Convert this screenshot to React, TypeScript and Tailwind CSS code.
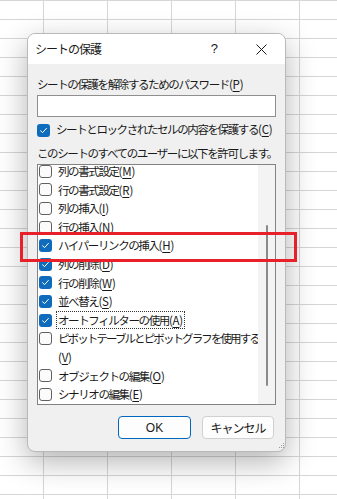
import React from 'react'

type Item = { label: string; key: string; checked: boolean; focus?: boolean; wrap?: boolean }

const items: Item[] = [
  { label: '列の書式設定', key: 'M', checked: false },
  { label: '行の書式設定', key: 'R', checked: false },
  { label: '列の挿入', key: 'I', checked: false },
  { label: '行の挿入', key: 'N', checked: false },
  { label: 'ハイパーリンクの挿入', key: 'H', checked: true },
  { label: '列の削除', key: 'D', checked: true },
  { label: '行の削除', key: 'W', checked: true },
  { label: '並べ替え', key: 'S', checked: true },
  { label: 'オートフィルターの使用', key: 'A', checked: true, focus: true },
  { label: 'ピボットテーブルとピボットグラフを使用する', key: 'V', checked: false, wrap: true },
  { label: 'オブジェクトの編集', key: 'O', checked: false },
  { label: 'シナリオの編集', key: 'E', checked: false },
]

function Checkbox({ checked }: { checked: boolean }) {
  if (checked) {
    return (
      <span className="flex h-[13px] w-[13px] shrink-0 items-center justify-center rounded-[3px] bg-[#0f6cbd]">
        <svg width="9" height="9" viewBox="0 0 9 9" fill="none">
          <path d="M1.6 4.8 L3.6 6.6 L7.4 2.4" stroke="white" strokeWidth="1" strokeLinecap="round" strokeLinejoin="round" />
        </svg>
      </span>
    )
  }
  return <span className="h-[13px] w-[13px] shrink-0 rounded-[3px] border border-[#616161] bg-[#fbfbfb]" />
}

function Hotkey({ k }: { k: string }) {
  return (
    <span className="tracking-[-0.2px]">
      (<span className="underline underline-offset-2">{k}</span>)
    </span>
  )
}

export default function App() {
  return (
    <div className="relative h-[499px] w-[337px] overflow-hidden bg-white bg-[linear-gradient(to_right,#d6d6d6_1px,transparent_1px),linear-gradient(to_bottom,#d6d6d6_1px,transparent_1px)] bg-[size:64px_19px] bg-[position:43px_0px] pl-[27px] pt-[33px] font-['Noto_Sans_CJK_JP',sans-serif] text-[11.5px] tracking-[-1.4px] text-[#1a1a1a]">
      {/* Dialog */}
      <div className="w-[259px] overflow-hidden rounded-[8px] border border-[#b9b9b9] bg-[#f0f0f0] shadow-[0_10px_30px_rgba(0,0,0,0.30)]">
        {/* Title bar */}
        <div className="flex h-[30px] items-center bg-white pl-[7px]">
          <span className="text-[12px] tracking-[-1px]">シートの保護</span>
          <span className="ml-auto mr-[38px] font-['Liberation_Sans',sans-serif] text-[13px] tracking-normal">?</span>
          <svg className="mr-[18px]" width="11" height="11" viewBox="0 0 11 11">
            <path d="M0.5 0.5 L10.5 10.5 M10.5 0.5 L0.5 10.5" stroke="#1a1a1a" strokeWidth="1" />
          </svg>
        </div>

        {/* Body */}
        <div className="flex flex-col px-[9px] pb-[12px] pt-[12px]">
          <div className="whitespace-nowrap leading-[16px]">
            シートの保護を解除するためのパスワード<Hotkey k="P" />
          </div>
          <div className="mt-[3px] h-[22px] w-[239px] border border-[#8f8f8f] bg-white" />

          <div className="mt-[5px] flex h-[16px] items-center gap-[6px] whitespace-nowrap">
            <Checkbox checked />
            <span>
              シートとロックされたセルの内容を保護する<Hotkey k="C" />
            </span>
          </div>

          <div className="mt-[7px] whitespace-nowrap leading-[16px]">このシートのすべてのユーザーに以下を許可します。</div>

          {/* List */}
          <div className="mt-[3px] flex h-[241px] w-[239px] overflow-hidden border border-[#828282] bg-white">
            <div className="flex-1 overflow-hidden pl-[1px]">
              <div className="-mt-[3px] flex flex-col">
                {items.map((it) => (
                  <div key={it.key} className="flex items-start gap-[4px] whitespace-nowrap leading-[18.6px]">
                    <span className="flex h-[18.6px] items-center">
                      <Checkbox checked={it.checked} />
                    </span>
                    <span
                      className={
                        it.focus
                          ? 'border border-dotted border-[#333] px-[1px] leading-[16.6px]'
                          : it.wrap
                            ? 'px-[2px] tracking-[-1.9px]'
                            : 'px-[2px]'
                      }
                    >
                      {it.label}
                      {it.wrap ? <br /> : null}
                      <Hotkey k={it.key} />
                    </span>
                  </div>
                ))}
              </div>
            </div>
            {/* Scrollbar */}
            <div className="flex w-[17px] shrink-0 justify-center bg-[#f3f3f3] pt-[60px]">
              <div className="h-[161px] w-[2px] rounded-full bg-[#8a8a8a]" />
            </div>
          </div>

          {/* Buttons */}
          <div className="mt-[11px] flex justify-end gap-[11px] pr-[2px]">
            <button className="flex h-[23px] w-[73px] items-center justify-center rounded-[4px] border border-[#0067c0] bg-[#fdfdfd] font-['Liberation_Sans',sans-serif] text-[12px] tracking-normal">
              OK
            </button>
            <button className="flex h-[23px] w-[72px] items-center justify-center rounded-[4px] border border-[#d0d0d0] bg-[#fdfdfd] text-[12px] tracking-[-1px]">
              キャンセル
            </button>
          </div>
        </div>
      </div>

      {/* Resize grip */}
      <svg className="absolute left-[279px] top-[443px]" width="6" height="6" viewBox="0 0 6 6" fill="#9a9a9a">
        <rect x="4" y="0" width="1" height="1" />
        <rect x="2" y="2" width="1" height="1" />
        <rect x="4" y="2" width="1" height="1" />
        <rect x="0" y="4" width="1" height="1" />
        <rect x="2" y="4" width="1" height="1" />
        <rect x="4" y="4" width="1" height="1" />
      </svg>

      {/* Annotation box */}
      <div className="absolute left-[20px] top-[232px] h-[30px] w-[277px] border-[3px] border-[#e8202a]" />
    </div>
  )
}
